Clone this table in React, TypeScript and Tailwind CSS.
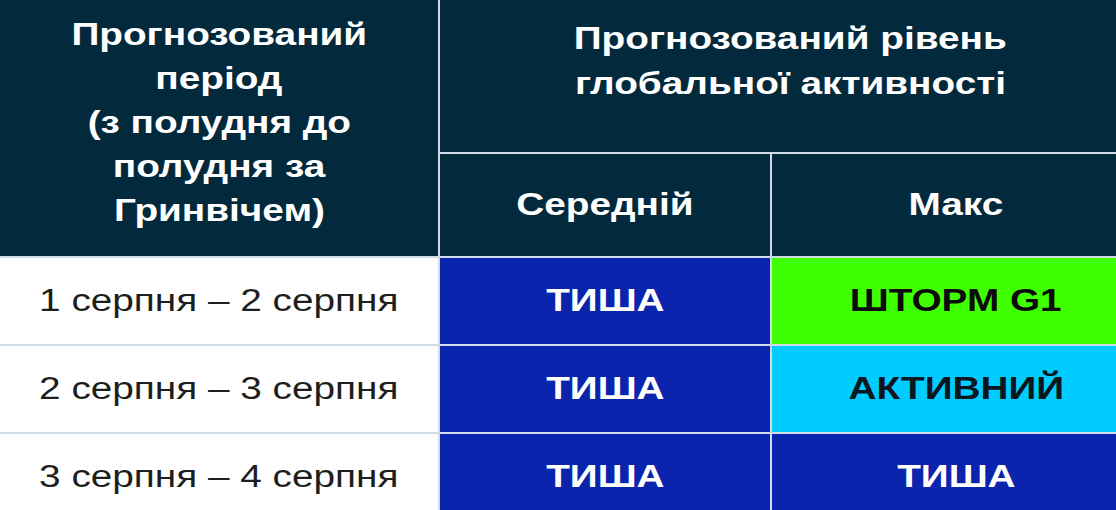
const rows = [
  { period: "1 серпня – 2 серпня", avg: "ТИША", max: "ШТОРМ G1", maxBg: "bg-[#40ff00]", maxText: "text-[#0b0b0b]" },
  { period: "2 серпня – 3 серпня", avg: "ТИША", max: "АКТИВНИЙ", maxBg: "bg-[#00ccff]", maxText: "text-[#0b1620]" },
  { period: "3 серпня – 4 серпня", avg: "ТИША", max: "ТИША", maxBg: "bg-[#0a24ae]", maxText: "text-white" },
]

function Stretch({ children }: { children: React.ReactNode }) {
  return <span className="inline-block scale-x-[1.25] whitespace-nowrap">{children}</span>
}

export default function App() {
  return (
    <div className="h-[510px] w-[1116px] overflow-hidden bg-white font-['Liberation_Sans',Arial,sans-serif]">
      <div className="grid w-[1140px] grid-cols-[438px_330px_1fr] grid-rows-[152px_102px_86px_86px_86px] gap-[2px] bg-[#cfdbe6]">
        <div className="row-span-2 bg-[#032a3c] pt-[13px] text-center text-[31px] font-bold leading-[44px] text-white">
          <Stretch>Прогнозований</Stretch>
          <br />
          <Stretch>період</Stretch>
          <br />
          <Stretch>(з полудня до</Stretch>
          <br />
          <Stretch>полудня за</Stretch>
          <br />
          <Stretch>Гринвічем)</Stretch>
        </div>
        <div className="col-span-2 bg-[#032a3c] pt-[16px] text-center text-[31px] font-bold leading-[45px] text-white">
          <Stretch>Прогнозований рівень</Stretch>
          <br />
          <Stretch>глобальної активності</Stretch>
        </div>
        <div className="flex items-center justify-center bg-[#032a3c] text-[31px] font-bold text-white">
          <Stretch>Середній</Stretch>
        </div>
        <div className="flex items-center justify-center bg-[#032a3c] text-[31px] font-bold text-white">
          <Stretch>Макс</Stretch>
        </div>
        {rows.map((r) => (
          <div key={r.period} className="contents">
            <div className="flex items-center justify-center bg-white text-[31px] text-[#1e1e1e]">
              <Stretch>{r.period}</Stretch>
            </div>
            <div className="flex items-center justify-center bg-[#0a24ae] text-[31px] font-bold text-white">
              <Stretch>{r.avg}</Stretch>
            </div>
            <div className={`flex items-center justify-center text-[31px] font-bold ${r.maxBg} ${r.maxText}`}>
              <Stretch>{r.max}</Stretch>
            </div>
          </div>
        ))}
      </div>
    </div>
  )
}
